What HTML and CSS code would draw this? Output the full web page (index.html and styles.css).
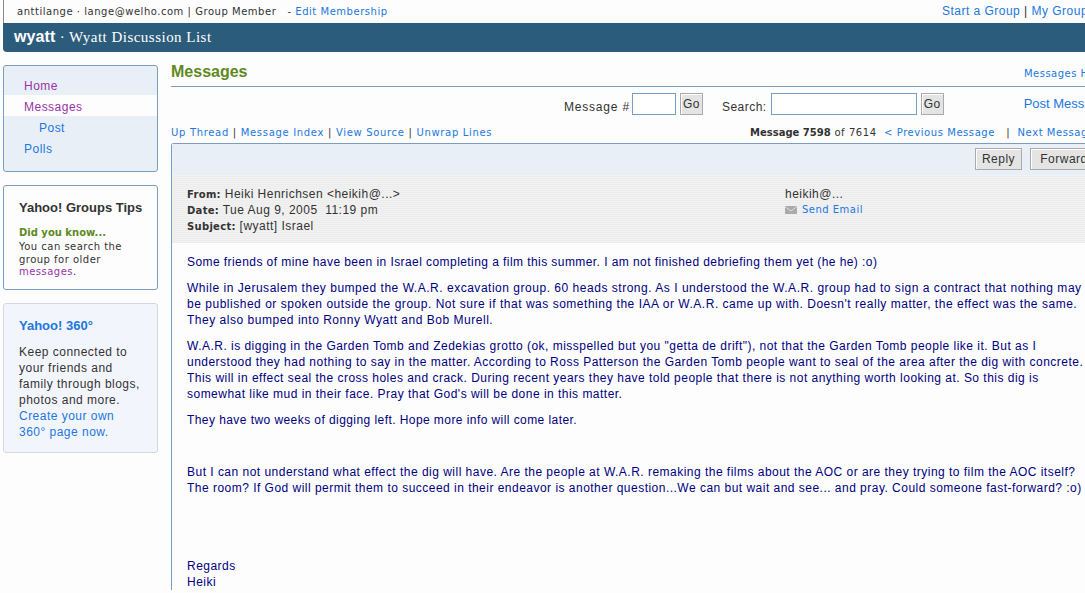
FILE: index.html
```html
<!doctype html>
<html lang="en">
<head>
  <meta charset="UTF-8">
  <title>Wyatt Discussion List</title>
  <link rel="stylesheet" href="styles.css">
</head>
<body>

<div id="page">
  <div id="topbar">
    <div class="who">anttilange &middot; lange@welho.com | Group Member &nbsp;&nbsp;- <a>Edit Membership</a></div>
    <div class="global"><a>Start a Group</a> | <a>My Groups</a></div>
  </div>

  <div id="banner"><b>wyatt</b> &middot; <span>Wyatt Discussion List</span></div>

  <div id="columns">
    <div id="side">
      <ul class="nav">
        <li><a class="seen">Home</a></li>
        <li class="on"><a class="seen">Messages</a></li>
        <li class="sub"><a>Post</a></li>
        <li><a>Polls</a></li>
      </ul>

      <div class="tips">
        <h4>Yahoo! Groups Tips</h4>
        <div class="know">Did you know...</div>
        <p>You can search the group for older <a class="seen">messages</a>.</p>
      </div>

      <div class="promo">
        <h4>Yahoo! 360&deg;</h4>
        <p>Keep connected to your friends and family through blogs, photos and more.<br><a>Create your own 360&deg; page now.</a></p>
      </div>
    </div>

    <div id="main">
      <div class="title">
        <h2>Messages</h2>
        <a class="help">Messages Help</a>
      </div>

      <div class="search">
        <label>Message #</label><input class="num" type="text"><button>Go</button>
        <label class="slabel">Search:</label><input class="term" type="text"><button>Go</button>
        <a class="post">Post Message</a>
      </div>

      <div class="links">
        <div><a>Up Thread</a> | <a>Message Index</a> | <a>View Source</a> | <a>Unwrap Lines</a></div>
        <div class="pager"><b>Message 7598</b> of 7614 &nbsp;<a>&lt; Previous Message</a> &nbsp; | &nbsp;<a>Next Message &gt;</a></div>
      </div>

      <div class="msg">
        <div class="actions"><button>Reply</button><button>Forward</button></div>
        <div class="head">
          <div class="fields">
            <div><b>From:</b> Heiki Henrichsen &lt;heikih@...&gt;</div>
            <div><b>Date:</b> Tue Aug 9, 2005 &nbsp;11:19 pm</div>
            <div><b>Subject:</b> [wyatt] Israel</div>
          </div>
          <div class="sender">
            <div>heikih@...</div>
            <div class="send">
              <svg width="12" height="8" viewBox="0 0 12 8"><rect width="12" height="8" fill="#aaa"/><path d="M0 0.5L6 5L12 0.5" fill="none" stroke="#ddd"/></svg>
              <a>Send Email</a>
            </div>
          </div>
        </div>
        <div class="body">
          <p class="tight">Some friends of mine have been in Israel completing a film this summer. I am not finished debriefing them yet (he he) :o)</p>
          <p class="wide">While in Jerusalem they bumped the W.A.R. excavation group. 60 heads strong. As I understood the W.A.R. group had to sign a contract that nothing may<br>be published or spoken outside the group. Not sure if that was something the IAA or W.A.R. came up with. Doesn't really matter, the effect was the same.<br>They also bumped into Ronny Wyatt and Bob Murell.</p>
          <p>W.A.R. is digging in the Garden Tomb and Zedekias grotto (ok, misspelled but you "getta de drift"), not that the Garden Tomb people like it. But as I<br>understood they had nothing to say in the matter. According to Ross Patterson the Garden Tomb people want to seal of the area after the dig with concrete.<br>This will in effect seal the cross holes and crack. During recent years they have told people that there is not anything worth looking at. So this dig is<br>somewhat like mud in their face. Pray that God's will be done in this matter.</p>
          <p class="tight">They have two weeks of digging left. Hope more info will come later.</p>
          <p class="gap1">But I can not understand what effect the dig will have. Are the people at W.A.R. remaking the films about the AOC or are they trying to film the AOC itself?<br>The room? If God will permit them to succeed in their endeavor is another question...We can but wait and see... and pray. Could someone fast-forward? :o)</p>
          <p class="gap2">Regards<br>Heiki</p>
        </div>
      </div>
    </div>
  </div>
</div>

</body>
</html>
```

FILE: styles.css
```css
html, body {
  margin: 0;
  height: 593px;
  overflow: hidden;
  background: #fdfdfd;
}

body {
  font-family: 'Liberation Sans', arial, sans-serif;
  font-size: 12px;
  letter-spacing: 0.48px;
  color: #333;
}

a {
  color: #2277dd;
}

a.seen {
  color: #9933aa;
}

#page {
  width: 1300px;
  margin-left: 3px;
}

#topbar {
  display: flex;
  justify-content: space-between;
  height: 23px;
  box-sizing: border-box;
  border-left: 1px solid #888;
  width: 1082px;
  overflow: hidden;
  white-space: nowrap;
}

#topbar .who {
  font-family: 'DejaVu Sans', sans-serif;
  font-size: 10px;
  letter-spacing: 0.53px;
  line-height: 23px;
  padding-left: 13px;
}

#topbar .global {
  font-size: 12px;
  line-height: 23px;
  width: 143px;
  flex: none;
}

#banner {
  height: 29px;
  line-height: 27px;
  width: 1082px;
  background: #2c5c7c;
  border-bottom-left-radius: 4px;
  color: #fff;
  font-family: 'Liberation Serif', serif;
  font-size: 15px;
  padding-left: 11px;
  box-sizing: border-box;
}

#banner b {
  font-family: 'Liberation Sans', arial, sans-serif;
  font-size: 16px;
  letter-spacing: 0.1px;
}

#columns {
  display: flex;
  gap: 13px;
  padding-top: 13px;
}

#side {
  width: 155px;
  flex: none;
}

.nav {
  list-style: none;
  margin: 0 0 13px;
  padding: 8px 0 13px;
  background: #e8eff7;
  border: 1px solid #7a9dc0;
  border-radius: 3px;
  height: 84px;
  font-size: 12px;
}

.nav li {
  height: 21px;
  line-height: 24px;
  padding-left: 20px;
}

.nav li.on {
  background: #fdfdfd;
}

.nav li.sub {
  padding-left: 35px;
}

.tips, .promo {
  border-radius: 3px;
  padding: 14px 14px 0 15px;
  box-sizing: border-box;
}

.tips {
  border: 1px solid #7a9dc0;
  height: 105px;
  margin-bottom: 13px;
}

.promo {
  border: 1px solid #d4d8de;
  background: #f3f5fd;
  height: 150px;
}

.tips h4, .promo h4 {
  margin: 0;
  font-size: 13px;
  line-height: 16px;
  letter-spacing: 0;
}

.know {
  margin-top: 10px;
  font-family: 'DejaVu Sans', sans-serif;
  font-size: 10px;
  font-weight: bold;
  letter-spacing: 0;
  color: #5e8a22;
  line-height: 14px;
}

.tips p {
  margin: 1px 0 0;
  font-family: 'DejaVu Sans', sans-serif;
  font-size: 10px;
  line-height: 12.5px;
}

.promo h4 {
  color: #2277dd;
}

.promo p {
  margin: 10px 0 0;
  line-height: 16px;
}

#main {
  flex: 1;
  min-width: 0;
}

.title {
  display: flex;
  justify-content: space-between;
  align-items: flex-start;
  height: 21px;
  border-bottom: 1px solid #7a9dc0;
  width: 914px;
  white-space: nowrap;
}

.title h2 {
  margin: 0;
  font-size: 16px;
  letter-spacing: 0;
  color: #5e8a22;
  line-height: 14px;
}

.help {
  font-family: 'DejaVu Sans', sans-serif;
  font-size: 10px;
  line-height: 18px;
  width: 61px;
  flex: none;
}

.search {
  display: flex;
  align-items: flex-start;
  padding: 6px 0 0 393px;
  height: 22px;
  width: 521px;
  overflow: hidden;
  white-space: nowrap;
}

.search label {
  line-height: 16px;
  padding-top: 6px;
}

.search label:first-child {
  letter-spacing: 0.8px;
}

.search input {
  height: 20px;
  padding: 0;
  border: 1px solid #7a9dc0;
  background: #fff;
  margin: 0 4px 0 2px;
  flex: none;
}

.search .num {
  width: 42px;
}

.search .term {
  width: 144px;
  margin-left: 4px;
}

.search .slabel {
  margin-left: 19px;
}

button {
  font-family: 'Liberation Sans', arial, sans-serif;
  font-size: 12px;
  letter-spacing: 0.48px;
  color: #333;
  background: #e4e4e4;
  border: 1px solid #aaa;
  box-shadow: inset 1px 1px 0 #fff;
  padding: 0;
  border-radius: 0;
}

.search button {
  width: 23px;
  height: 22px;
  flex: none;
}

.post {
  margin-left: 80px;
  font-size: 13px;
  letter-spacing: 0;
  line-height: 22px;
  flex: none;
}

.links {
  display: flex;
  justify-content: space-between;
  font-family: 'DejaVu Sans', sans-serif;
  font-size: 10px;
  letter-spacing: 0.68px;
  line-height: 13px;
  padding-top: 11px;
  height: 17px;
  width: 914px;
  white-space: nowrap;
  overflow: hidden;
}

.pager {
  width: 335px;
  flex: none;
  letter-spacing: 0.56px;
}

.pager b {
  letter-spacing: 0;
}

.msg {
  width: 1000px;
  border: 1px solid #7a9dc0;
  border-right: 0;
  border-bottom: 0;
  border-top-left-radius: 3px;
}

.actions {
  display: flex;
  background: #e8eff7;
  height: 31px;
  padding-left: 803px;
  gap: 8px;
  padding-top: 4px;
  box-sizing: border-box;
}

.actions button {
  height: 22px;
  width: 47px;
  flex: none;
}

.actions button + button {
  width: 68px;
}

.head {
  display: flex;
  background: repeating-linear-gradient(#f2f2f2 0, #f2f2f2 1px, #ececec 1px, #ececec 2px);
  height: 68px;
  padding: 11px 0 0 15px;
  box-sizing: border-box;
  line-height: 16px;
}

.head b {
  font-family: 'DejaVu Sans', sans-serif;
  font-size: 10px;
  line-height: 10px;
  letter-spacing: 0.3px;
}

.fields {
  width: 598px;
  flex: none;
}

.send {
  display: flex;
  align-items: center;
  gap: 5px;
  font-family: 'DejaVu Sans', sans-serif;
  font-size: 10px;
}

.body {
  padding: 11px 0 0 15px;
  color: #000080;
  line-height: 16px;
  white-space: nowrap;
}

.body p {
  margin: 0 0 10px;
}

.body .tight {
  letter-spacing: 0.43px;
}

.body .wide {
  letter-spacing: 0.52px;
}

.body .gap1 {
  margin-top: 36px;
}

.body .gap2 {
  margin-top: 62px;
}
```
